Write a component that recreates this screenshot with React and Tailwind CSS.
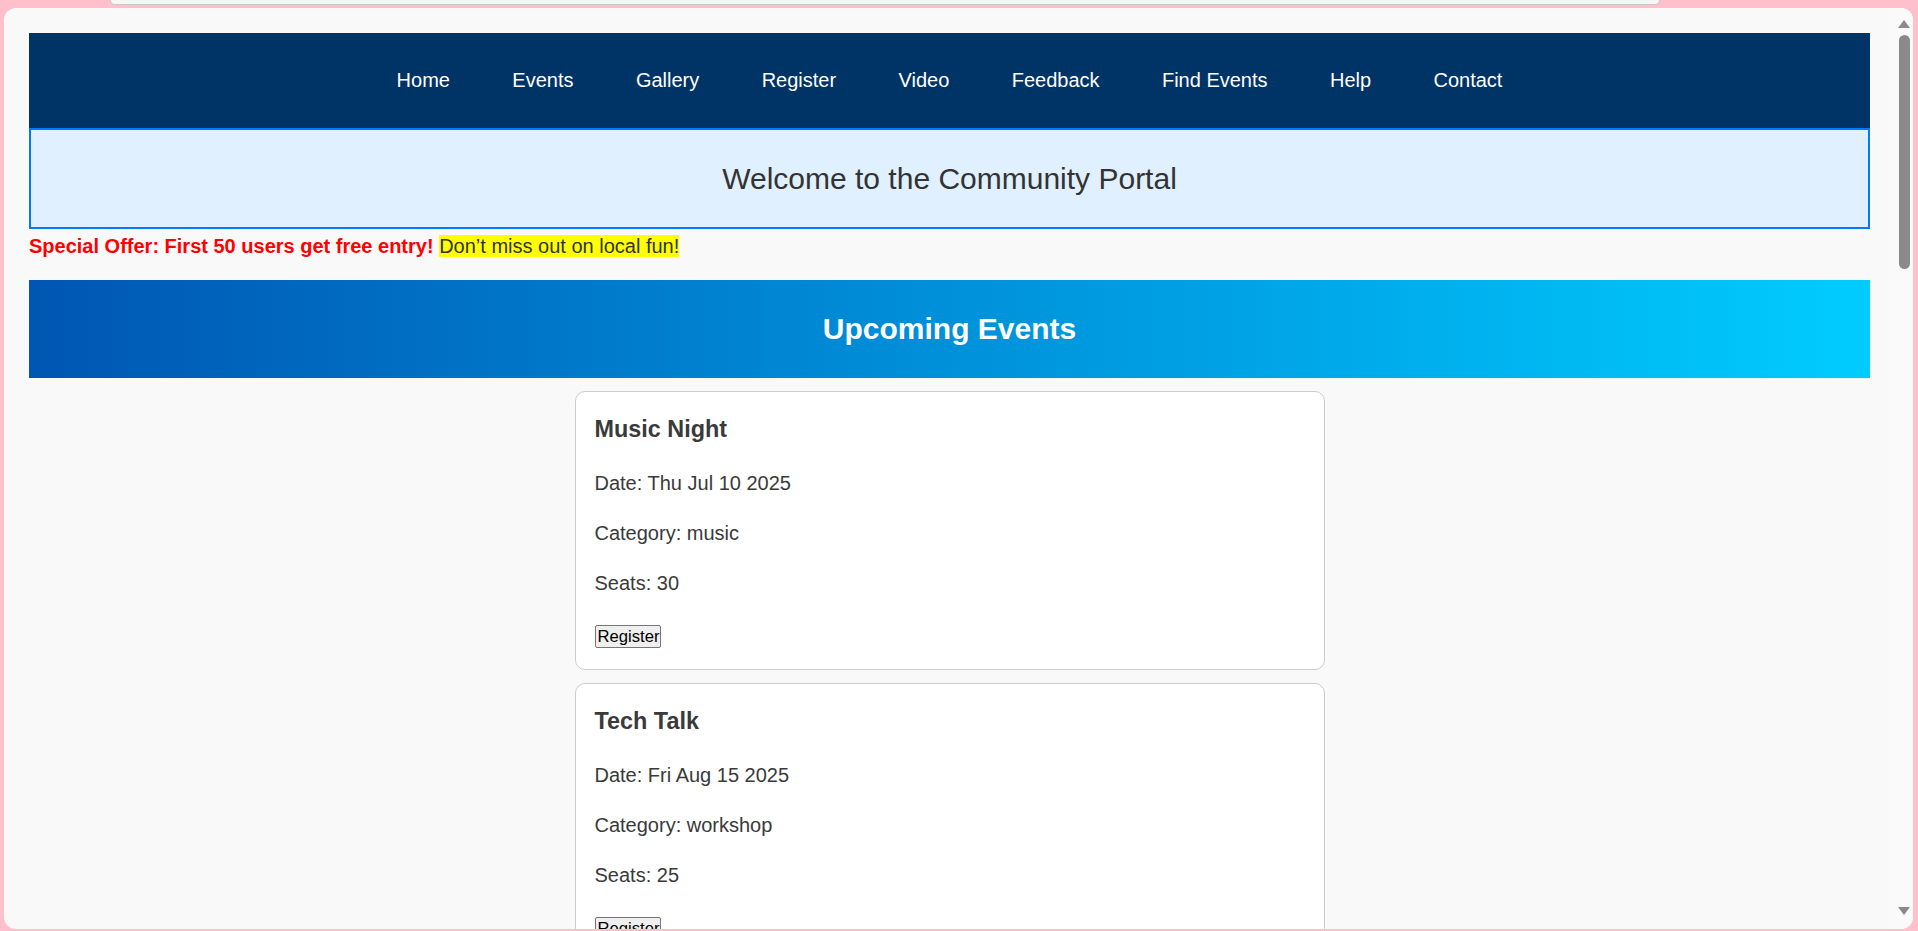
import React from "react";

const events = [
  { title: "Music Night", date: "Thu Jul 10 2025", category: "music", seats: 30 },
  { title: "Tech Talk", date: "Fri Aug 15 2025", category: "workshop", seats: 25 },
  { title: "Art Fair", date: "Sat Sep 20 2025", category: "art", seats: 40 },
];

const navItems = ["Home", "Events", "Gallery", "Register", "Video", "Feedback", "Find Events", "Help", "Contact"];

function EventCard({ e }) {
  return (
    <div className="w-[750px] mx-auto mt-[13px] bg-white border border-[#cccccc] rounded-[10px] pl-[19px] pr-[20px] pt-[19.5px] pb-[21px] text-[#3a3a3a] flex flex-col items-start">
      <h3 className="text-[23.4px] leading-[35px] font-bold mb-[21.5px]">{e.title}</h3>
      <p className="text-[20px] leading-[30px]">Date: {e.date}</p>
      <p className="text-[20px] leading-[30px] mt-[20px]">Category: {e.category}</p>
      <p className="text-[20px] leading-[30px] mt-[20px]">Seats: {e.seats}</p>
      <button className="mt-[27px] w-[66px] h-[23px] pl-[2px] text-left whitespace-nowrap overflow-visible text-[16.67px] leading-[19px] text-black bg-[#efefef] border border-[#767676] rounded-[2px]">
        Register
      </button>
    </div>
  );
}

export default function App() {
  return (
    <div className="w-[1918px] h-[931px] overflow-hidden bg-[#ffc0cb] font-['Liberation_Sans',Arial,sans-serif]">
      <div className="ml-[110px] w-[1550px] h-[5px] bg-[#f7f7f7] border-x border-b border-[#c8c8c8] rounded-b-[10px]" />
      <div className="ml-[4px] mt-[3px] w-[1909px] h-[921px] bg-[#f9f9f9] rounded-[12px] overflow-hidden flex">
        <div className="flex-1 min-w-0 h-full overflow-hidden px-[25px] pt-[25px]">
          <nav className="h-[95px] pb-[2px] bg-[#003366] flex items-center justify-center gap-[62.4px] text-[20px] text-white">
            {navItems.map((n) => (
              <span key={n} className="whitespace-nowrap">{n}</span>
            ))}
          </nav>
          <div className="h-[101px] border-2 border-[#007bff] bg-[#e0f0ff] flex items-center justify-center">
            <h2 className="text-[30px] leading-[35px] text-[#333333]">Welcome to the Community Portal</h2>
          </div>
          <p className="mt-[6px] text-[20px] leading-[23px] whitespace-nowrap">
            <span className="font-bold text-[#ff0000]">Special Offer: First 50 users get free entry!</span>{" "}
            <span className="bg-[#ffff00] text-[#333333]">Don’t miss out on local fun!</span>
          </p>
          <div className="mt-[22px] h-[98px] pb-[2px] bg-gradient-to-r from-[#0056b3] to-[#00ccff] flex items-center justify-center">
            <h2 className="text-[30px] leading-[35px] font-bold text-white">Upcoming Events</h2>
          </div>
          {events.map((e) => (
            <EventCard key={e.title} e={e} />
          ))}
        </div>
        <div className="w-[18px] h-full bg-[#fafafa] flex flex-col items-center pt-[12px] pb-[14px]">
          <svg width="12" height="8" viewBox="0 0 12 8"><path d="M6 0 L12 8 L0 8 Z" fill="#8a8a8a" /></svg>
          <div className="mt-[7px] w-[11px] h-[234px] rounded-full bg-[#8a8a8a]" />
          <div className="flex-1" />
          <svg width="12" height="8" viewBox="0 0 12 8"><path d="M0 0 L12 0 L6 8 Z" fill="#8a8a8a" /></svg>
        </div>
      </div>
    </div>
  );
}
